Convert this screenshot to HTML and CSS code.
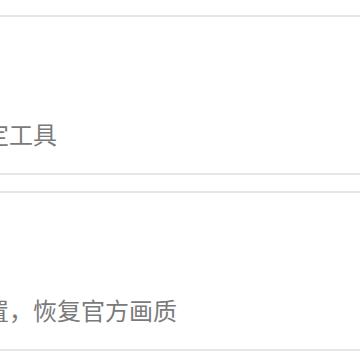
FILE: index.html
```html
<!DOCTYPE html>
<html lang="zh-CN">
<head>
    <meta charset="UTF-8">
    <meta name="viewport" content="width=device-width, initial-scale=1.0">
    <title>画质设置</title>
    <link rel="stylesheet" href="styles.css">
</head>
<body>
    <div class="list">
        <div class="item">
            <div class="item-desc">锁定工具</div>
        </div>
        <div class="item">
            <div class="item-desc">设置，恢复官方画质</div>
        </div>
    </div>
</body>
</html>
```

FILE: styles.css
```css
html, body {
    margin: 0;
    padding: 0;
    background: #fff;
    overflow: hidden;
}

body {
    font-family: "Noto Sans CJK SC", "Noto Sans", sans-serif;
    padding-top: 15px;
}

.list {
    margin-left: -60px;
    width: calc(100% + 120px);
}

.item {
    background: #fff;
    border-top: 2px solid #e6e6e6;
    border-bottom: 2px solid #e6e6e6;
    padding: 105px 0 27px 21px;
}

.item + .item {
    margin-top: 16px;
}

.item-desc {
    font-size: 24px;
    line-height: 24px;
    color: #7a7a7a;
    white-space: nowrap;
}
```
